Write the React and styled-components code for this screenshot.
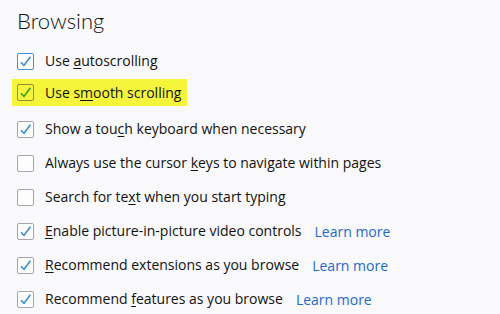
import React from "react";
import styled, { createGlobalStyle } from "styled-components";

const GlobalStyle = createGlobalStyle`
  html, body {
    margin: 0;
    padding: 0;
    background: #f9f9fb;
  }
  body {
    font-family: "Open Sans", "Noto Sans", sans-serif;
    color: #111113;
  }
`;

const Page = styled.div`
  width: 500px;
  height: 314px;
  overflow: hidden;
  padding: 0 0 0 17px;
  box-sizing: border-box;
`;

const Heading = styled.h1`
  margin: 0;
  height: 44px;
  padding-top: 6px;
  box-sizing: border-box;
  font-family: Lato, "Open Sans", sans-serif;
  font-size: 22px;
  font-weight: 300;
  line-height: 30px;
`;

const Row = styled.div`
  height: 34px;
  display: flex;
  align-items: center;
`;

const Item = styled.label`
  display: flex;
  align-items: center;
  gap: 11px;
  font-size: 14px;
  line-height: 20px;
  background: ${(p) => (p.$marked ? "#f5f53c" : "transparent")};
  margin: ${(p) => (p.$marked ? "-6px 0 0 -5px" : "0")};
  padding: ${(p) => (p.$marked ? "4px 6px 3px 5px" : "0")};
`;

const Box = styled.span`
  width: 17px;
  height: 17px;
  box-sizing: border-box;
  flex: none;
  display: flex;
  align-items: center;
  justify-content: center;
  border: 1px solid
    ${(p) => (p.$marked ? "#8e8e3c" : p.$focus ? "#3d8fd8" : "#a5a5ad")};
  border-radius: 2px;
  background: ${(p) => (p.$marked ? "transparent" : "#fdfdfd")};
`;

const Key = styled.span`
  text-decoration: underline;
  text-underline-offset: 2px;
`;

const LearnMore = styled.a`
  color: #2368cf;
  text-decoration: none;
  margin-left: 13px;
  font-size: 14px;
`;

const Check = ({ color }) => (
  <svg width="13" height="13" viewBox="0 0 13 13">
    <path
      d="M2 7.2 L5 10.4 L11.4 1.8"
      fill="none"
      stroke={color}
      strokeWidth="1.5"
    />
  </svg>
);

const Option = ({ checked, focus, marked, link, children }) => (
  <Row>
    <Item $marked={marked}>
      <Box $marked={marked} $focus={focus}>
        {checked && <Check color={marked ? "#2f9a2c" : "#2f8ad8"} />}
      </Box>
      <span>{children}</span>
    </Item>
    {link && <LearnMore href="#">Learn more</LearnMore>}
  </Row>
);

export default function App() {
  return (
    <>
      <GlobalStyle />
      <Page>
        <Heading>Browsing</Heading>
        <Option checked focus>
          Use <Key>a</Key>utoscrolling
        </Option>
        <Option checked marked>
          Use s<Key>m</Key>ooth scrolling
        </Option>
        <Option checked>
          Show a tou<Key>c</Key>h keyboard when necessary
        </Option>
        <Option>
          Always use the cursor <Key>k</Key>eys to navigate within pages
        </Option>
        <Option>
          Search for te<Key>x</Key>t when you start typing
        </Option>
        <Option checked link>
          <Key>E</Key>nable picture-in-picture video controls
        </Option>
        <Option checked link>
          <Key>R</Key>ecommend extensions as you browse
        </Option>
        <Option checked link>
          Recommend <Key>f</Key>eatures as you browse
        </Option>
      </Page>
    </>
  );
}
